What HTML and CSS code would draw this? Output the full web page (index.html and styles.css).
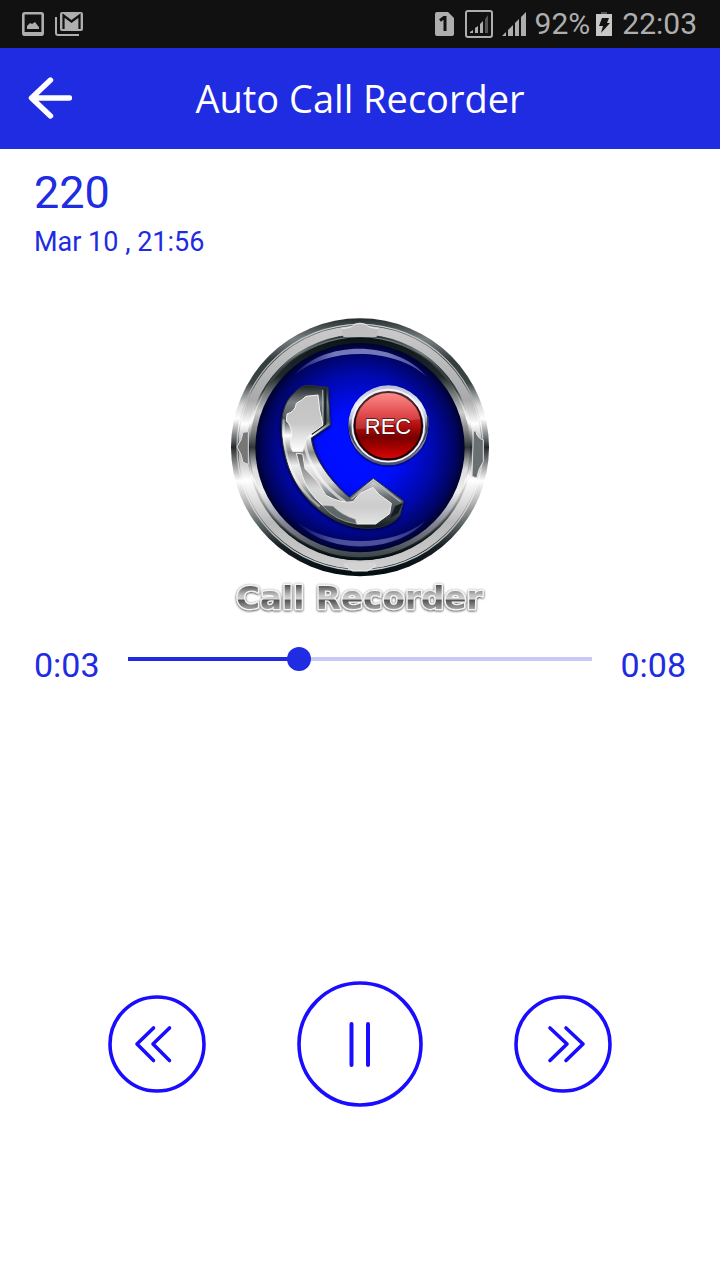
FILE: index.html
```html
<!DOCTYPE html>
<html lang="en">
<head>
<meta charset="utf-8">
<meta name="viewport" content="width=device-width, initial-scale=1">
<title>Auto Call Recorder</title>
<link rel="stylesheet" href="styles.css">
</head>
<body>
<div class="status-bar">
  <div class="status-group notices">
    <svg width="22" height="24" viewBox="0 0 22 24" aria-hidden="true"><rect x="1.3" y="1.3" width="19.4" height="21.4" rx="1.5" fill="none" stroke="#aeaeae" stroke-width="2.6"/><path d="M2 20h18v2H2z" fill="#aeaeae"/><path d="M5 17v-3l3-3 2 1 3-2 3 4 1 1v2z" fill="#aeaeae"/></svg>
    <svg width="28" height="24" viewBox="0 0 28 24" aria-hidden="true"><path d="M1 5v16q0 2 2 2h21" fill="none" stroke="#aeaeae" stroke-width="2"/><rect x="5" y="0" width="23" height="19" rx="2" fill="#aeaeae"/><path d="M8.500 17V3.500l8 6 8-6V17" fill="none" stroke="#111" stroke-width="2.200"/></svg>
  </div>
  <div class="status-group">
    <svg width="19" height="24" viewBox="0 0 19 24" aria-hidden="true"><path d="M2 0h11l6 6v16q0 2-2 2H2q-2 0-2-2V2q0-2 2-2z" fill="#aeaeae"/><path d="M5 8.500 9 5.500h1V19" fill="none" stroke="#111" stroke-width="3"/></svg>
    <svg class="sim" width="28" height="28" viewBox="0 0 28 28" aria-hidden="true"><rect x="1" y="1" width="26" height="26" rx="2" fill="none" stroke="#aeaeae" stroke-width="2"/><path d="M5 23v-1l3-2v3zM10 23v-5l3-2v7zM15 23v-9l3-3v12z" fill="#aeaeae"/><path d="M20 23V9l3-4v18z" fill="#555"/></svg>
    <svg class="signal" width="24" height="24" viewBox="0 0 24 24" aria-hidden="true"><path d="M0 24l4-4v4zM6 24v-6l5-5v11zM13 24V11l4-4v17zM19 24V5l5-5v24z" fill="#aeaeae"/></svg>
    <span>92%</span>
    <svg width="16" height="24" viewBox="0 0 16 24" aria-hidden="true"><path d="M5 0h6v3H5z" fill="#555"/><path d="M0 2h16v22H0z" fill="#c8c8c8"/><path d="M6 6h7l-2 5h3l-9 10 2-7H3z" fill="#111"/></svg>
    <span>22:03</span>
  </div>
</div>

<header class="app-bar">
  <button class="icon-button back" type="button" aria-label="Back">
    <svg width="44" height="42" viewBox="0 0 44 42" aria-hidden="true"><path d="M22.500 3 3.500 21l19 18M4 21h37.500" fill="none" stroke="#fff" stroke-width="5.400" stroke-linecap="round" stroke-linejoin="round"/></svg>
  </button>
  <h1>Auto Call Recorder</h1>
</header>

<main class="player">
  <section class="call">
    <h2>220</h2>
    <p>Mar 10 , 21:56</p>
  </section>

  <svg class="logo" viewBox="0 0 840 930" role="img" aria-label="Call Recorder">
    <defs>
      <linearGradient id="chrome" x1="0" y1="0" x2="0" y2="1">
        <stop offset="0" stop-color="#242c2e"/><stop offset=".08" stop-color="#788082"/><stop offset=".16" stop-color="#343c3e"/><stop offset=".25" stop-color="#3c4446"/><stop offset=".34" stop-color="#ddd"/><stop offset=".39" stop-color="#fff"/><stop offset=".45" stop-color="#858989"/><stop offset=".5" stop-color="#22292b"/><stop offset=".55" stop-color="#777"/><stop offset=".63" stop-color="#fff"/><stop offset=".71" stop-color="#b8b8b8"/><stop offset=".8" stop-color="#596163"/><stop offset=".88" stop-color="#182124"/><stop offset="1" stop-color="#020d12"/>
      </linearGradient>
      <linearGradient id="bevel" x1="0" y1="0" x2="0" y2="1">
        <stop offset="0" stop-color="#c9c9c9"/><stop offset=".3" stop-color="#aaa"/><stop offset=".4" stop-color="#fff"/><stop offset=".5" stop-color="#999"/><stop offset=".64" stop-color="#fff"/><stop offset=".82" stop-color="#b9b9b9"/><stop offset="1" stop-color="#ccc"/>
      </linearGradient>
      <linearGradient id="lip" x1="0" y1="0" x2="0" y2="1">
        <stop offset="0" stop-color="#0b1518"/><stop offset=".18" stop-color="#20292b"/><stop offset=".34" stop-color="#ccc"/><stop offset=".42" stop-color="#888"/><stop offset=".5" stop-color="#303738"/><stop offset=".6" stop-color="#ddd"/><stop offset=".7" stop-color="#eee"/><stop offset=".84" stop-color="#889"/><stop offset="1" stop-color="#3c4547"/>
      </linearGradient>
      <radialGradient id="face" cx=".5" cy=".5" r=".5">
        <stop offset="0" stop-color="#0010ff"/><stop offset=".35" stop-color="#000eff"/><stop offset=".72" stop-color="#0008a8"/><stop offset=".92" stop-color="#000460"/><stop offset="1" stop-color="#00022c"/>
      </radialGradient>
      <linearGradient id="shine" x1="0" y1="0" x2="1" y2="0">
        <stop offset="0" stop-color="#9ca2ff" stop-opacity=".1"/><stop offset=".3" stop-color="#a7a9e2" stop-opacity=".7"/><stop offset=".7" stop-color="#a7a9e2" stop-opacity=".7"/><stop offset="1" stop-color="#9ca2ff" stop-opacity=".4"/>
      </linearGradient>
      <linearGradient id="phone" x1="0" y1="0" x2="0" y2="1">
        <stop offset="0" stop-color="#182023"/><stop offset=".12" stop-color="#7b8184"/><stop offset=".25" stop-color="#4b5356"/><stop offset=".35" stop-color="#fff"/><stop offset=".47" stop-color="#888"/><stop offset=".56" stop-color="#eee"/><stop offset=".68" stop-color="#d0d0d0"/><stop offset=".78" stop-color="#656d70"/><stop offset=".88" stop-color="#444c4f"/><stop offset="1" stop-color="#10181a"/>
      </linearGradient>
      <linearGradient id="plate" x1="0" y1="0" x2="0" y2="1">
        <stop offset="0" stop-color="#c2c2c2"/><stop offset=".5" stop-color="#c8c8c8"/><stop offset="1" stop-color="#fff"/>
      </linearGradient>
      <linearGradient id="plate-low" x1="0" y1="0" x2="0" y2="1">
        <stop offset="0" stop-color="#5c6264"/><stop offset=".25" stop-color="#999"/><stop offset=".5" stop-color="#d8d8d8"/><stop offset=".75" stop-color="#ccc"/><stop offset="1" stop-color="#e2e2e2"/>
      </linearGradient>
      <linearGradient id="rec-ring" x1="0" y1="0" x2="0" y2="1">
        <stop offset="0" stop-color="#b9bdd2"/><stop offset=".25" stop-color="#eef0fa"/><stop offset=".42" stop-color="#b7bbd0"/><stop offset=".52" stop-color="#525a78"/><stop offset=".7" stop-color="#9297ab"/><stop offset="1" stop-color="#454d6c"/>
      </linearGradient>
      <linearGradient id="rec-red" x1="0" y1="0" x2="0" y2="1">
        <stop offset="0" stop-color="#ff7777"/><stop offset=".35" stop-color="#d92528"/><stop offset=".55" stop-color="#a40808"/><stop offset=".68" stop-color="#780000"/><stop offset=".85" stop-color="#b00000"/><stop offset="1" stop-color="#d80808"/>
      </linearGradient>
      <linearGradient id="metal-text" x1="0" y1="0" x2="0" y2="1">
        <stop offset=".18" stop-color="#555"/><stop offset=".42" stop-color="#bbb"/><stop offset=".53" stop-color="#d4d4d4"/><stop offset=".57" stop-color="#555"/><stop offset=".82" stop-color="#aaa"/>
      </linearGradient>
      <filter id="soft" x="-10%" y="-10%" width="120%" height="120%"><feGaussianBlur stdDeviation="5"/></filter>
      <filter id="glow" x="-10%" y="-30%" width="120%" height="160%"><feDropShadow dx="0" dy="2" stdDeviation="3" flood-color="#222" flood-opacity="1"/></filter>
    </defs>

    <circle cx="420" cy="412" r="387" fill="url(#chrome)"/>
    <circle cx="420" cy="412" r="369" fill="none" stroke="url(#bevel)" stroke-width="4"/>
    <circle cx="420" cy="412" r="352" fill="none" stroke="url(#bevel)" stroke-width="26"/>
    <circle cx="420" cy="412" r="336" fill="none" stroke="url(#chrome)" stroke-width="5"/>
    <path d="M365 55q30 0 38-12 17-7 34 0 10 12 38 12l-5 26H370z" fill="#bebebe"/>
    <path d="M365 55q30 0 38-12 17-7 34 0 10 12 38 12" fill="none" stroke="#eee" stroke-width="3"/>
    <path d="M374 757h94q-6 17-26 26h-44q-16-8-24-26z" fill="#d3d3d3"/>
    <path d="M374 763q8 12 24 20h44q20-9 26-20" fill="none" stroke="#eee" stroke-width="3"/>
    <path d="M69 367q-3 23-18 44 14 20 18 46l16 6v-98z" fill="#777" stroke="#ddd" stroke-width="3"/>
    <path d="M767 362q3 22 23 28v65q-15 20-20 49l-14-5 4-134z" fill="#697072" stroke="#ddd" stroke-width="3"/>
    <circle cx="420" cy="412" r="330" fill="url(#lip)"/>
    <circle cx="420" cy="413" r="314" fill="url(#face)"/>
    <path d="M224 195C310 91 525 88 620 200 527 112 325 108 224 195z" fill="url(#shine)"/>
    <path d="M230 634C315 734 525 735 615 634 522 712 325 714 230 634z" fill="url(#shine)" opacity=".65"/>

    <path d="M268 230 324 236 332 349 278 386C280 445 340 520 388 566L460 509 552 577 540 622C510 661 453 667 399 656 295 630 222 544 198 461 172 376 173 289 218 257 238 233 248 228 268 230z" fill="#000438" filter="url(#soft)"/>
    <path d="M268 226 324 232 331 345 274 384C280 445 335 517 388 562L460 505 551 573 540 616C510 655 453 661 399 650 295 624 225 540 201 457 176 372 177 286 221 251 238 232 248 226 268 226z" fill="url(#phone)" stroke="#293235" stroke-width="3"/>
    <path d="M191 328C185 441 221 527 299 590" fill="none" stroke="#fff" stroke-opacity=".45" stroke-width="7"/>
    <path d="M253 390C258 459 314 534 376 577" fill="none" stroke="#fff" stroke-opacity=".6" stroke-width="9"/>
    <path d="M316 236v105l-42 31" fill="none" stroke="#182225" stroke-width="7"/>
    <path d="M308 240v100l-36 27" fill="none" stroke="#a9b0b2" stroke-width="3"/>
    <path d="M258 259 294 255 299 300 309 345 272 372 257 389 248 424 218 424Q207 405 216 374 213 344 199 333L201 312Q226 305 229 280 244 273 258 259z" fill="url(#plate)" stroke="#f4f4f4" stroke-width="3"/>
    <path d="M229 430 248 432 255 476 293 516 318 556Q365 582 399 575L420 550 459 532 477 553 514 580 509 611 482 631 467 642 410 642 406 628Q354 612 337 588L307 586Q259 542 247 497z" fill="url(#plate-low)" stroke="#eee" stroke-width="3"/>
    <path d="M307 586 339 588Q363 614 406 628L410 642Q343 632 307 586z" fill="#606769" stroke="#bbb" stroke-width="2"/>
    <path d="M394 568 460 513 542 575" fill="none" stroke="#aeb3b4" stroke-width="4"/>
    <path d="M548 579 535 610 510 624 526 588z" fill="#141d20"/>

    <circle cx="505" cy="349" r="122" fill="#000550" opacity=".6"/>
    <circle cx="505" cy="346" r="120" fill="url(#rec-ring)"/>
    <path d="M387 350A118 118 0 0 0 623 320" fill="none" stroke="#3c435c" stroke-width="5"/>
    <circle cx="505" cy="347" r="108" fill="none" stroke="#f4f5ff" stroke-width="5"/>
    <circle cx="505" cy="347" r="101" fill="url(#rec-red)" stroke="#240000" stroke-width="6"/>
    <path d="M407 350A98 98 0 0 1 602 328C548 329 478 357 407 358z" fill="#fff" opacity=".16"/>
    <text class="rec-text" x="504" y="373" text-anchor="middle">REC</text>
    <text class="logo-text" x="418" y="896" text-anchor="middle" fill="url(#metal-text)" filter="url(#glow)">Call Recorder</text>
  </svg>

  <div class="timeline">
    <span>0:03</span>
    <input class="seek" type="range" min="0" max="8" step="0.1" value="2.9" aria-label="Playback position">
    <span>0:08</span>
  </div>

  <div class="controls">
    <button class="icon-button" type="button" aria-label="Rewind">
      <svg width="98" height="98" viewBox="0 0 98 98" aria-hidden="true"><g fill="none" stroke="#1a0dff" stroke-width="3.600" stroke-linecap="round" stroke-linejoin="round"><circle cx="49" cy="49" r="47"/><path d="M45.500 33 29 49l16.500 16.500M61.500 33 45 49l16.500 16.500"/></g></svg>
    </button>
    <button class="icon-button" type="button" aria-label="Pause">
      <svg width="126" height="126" viewBox="0 0 126 126" aria-hidden="true"><g fill="none" stroke="#1a0dff" stroke-linecap="round"><circle cx="63" cy="63" r="61" stroke-width="3.600"/><path d="M54.500 43v41M71 43v41" stroke-width="4"/></g></svg>
    </button>
    <button class="icon-button" type="button" aria-label="Fast forward">
      <svg width="98" height="98" viewBox="0 0 98 98" aria-hidden="true"><g fill="none" stroke="#1a0dff" stroke-width="3.600" stroke-linecap="round" stroke-linejoin="round"><circle cx="49" cy="49" r="47"/><path d="M36 33 53 49 36 65.500M52 33l17 16L52 65.500"/></g></svg>
    </button>
  </div>
</main>
</body>
</html>
```
FILE: styles.css
```css
* {
  box-sizing: border-box;
}

body {
  margin: 0;
  min-height: 100vh;
  display: flex;
  flex-direction: column;
  background: #fff;
  color: #202ce2;
  font-family: Roboto, sans-serif;
}

h1,
h2,
p {
  margin: 0;
  font-weight: 400;
}

svg {
  display: block;
  flex: none;
}

.status-bar {
  display: flex;
  justify-content: space-between;
  height: 48px;
  padding: 0 23px 0 22px;
  background: #111;
  color: #aeaeae;
  font-size: 30px;
  line-height: 50px;
}

.status-group {
  display: flex;
  align-items: center;
}

.notices {
  gap: 11px;
}

.sim {
  margin-left: 11px;
}

.signal {
  margin: 0 9px;
}

.status-group span + svg {
  margin: 0 10px 0 6px;
}

.app-bar {
  display: grid;
  grid-template-columns: 44px 1fr 44px;
  align-items: center;
  height: 101px;
  padding: 0 28px 2px;
  background: #202ce2;
  color: #fff;
}

.app-bar h1 {
  font-family: "Open Sans", sans-serif;
  font-size: 38px;
  line-height: 52px;
  text-align: center;
}

.icon-button {
  display: block;
  padding: 0;
  border: 0;
  background: none;
  cursor: pointer;
}

.player {
  flex: 1;
  display: flex;
  flex-direction: column;
  padding: 16px 34px 173px;
}

.call h2 {
  font-size: 45px;
  line-height: 56px;
}

.call p {
  font-size: 27px;
  line-height: 42px;
}

.logo {
  width: 280px;
  margin: 47px auto 25px;
}

.rec-text {
  fill: #fff;
  stroke: #4d1111;
  stroke-width: 4px;
  paint-order: stroke;
  font: 66px "Liberation Sans", sans-serif;
}

.logo-text {
  stroke: #f4f4f4;
  stroke-width: 8px;
  stroke-linejoin: round;
  paint-order: stroke;
  font: bold 98px "DejaVu Sans", sans-serif;
}

.timeline {
  display: flex;
  align-items: flex-start;
  gap: 28px;
  font-size: 34px;
  line-height: 40px;
}

.seek {
  flex: 1;
  min-width: 0;
  height: 28px;
  margin: 0;
  appearance: none;
  background: linear-gradient(to right, #202ce2 37%, #c7c9f6 37%) center / 100% 4px no-repeat;
}

.seek::-webkit-slider-thumb {
  appearance: none;
  width: 24px;
  height: 24px;
  border: 0;
  border-radius: 50%;
  background: #202ce2;
}

.controls {
  display: flex;
  align-items: center;
  justify-content: center;
  gap: 91px;
  margin-top: auto;
}
```
